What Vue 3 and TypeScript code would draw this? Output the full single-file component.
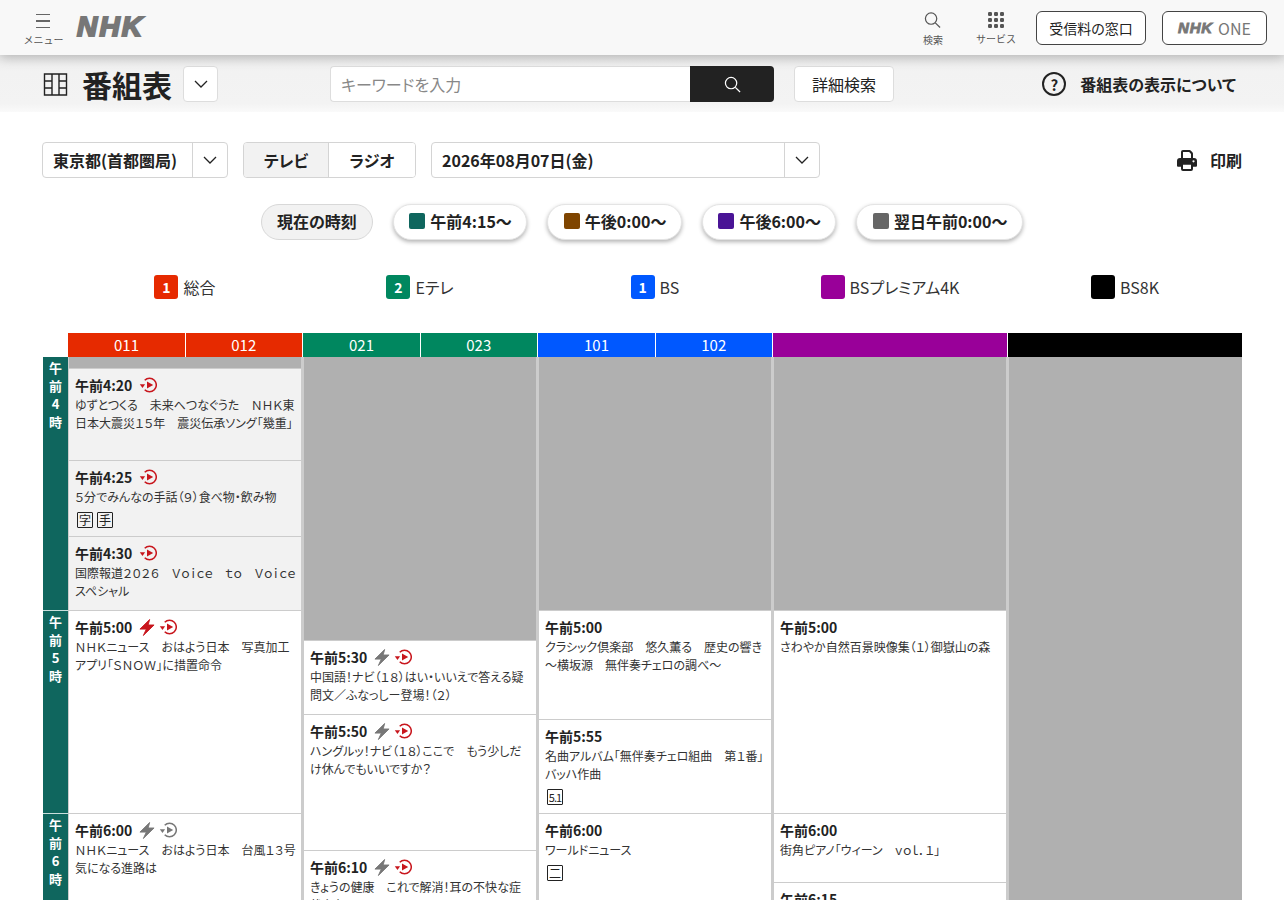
<script setup lang="ts">
import { computed } from 'vue'

type Program = {
	time?: string
	text?: string
	height: number
	past?: boolean
	blank?: boolean
	bolt?: 'red' | 'gray'
	replay?: 'red' | 'gray'
	marks?: string[]
}

const pills = [
	{ label: '午前4:15〜', color: '#0f665e' },
	{ label: '午後0:00〜', color: '#7f4500' },
	{ label: '午後6:00〜', color: '#4a1496' },
	{ label: '翌日午前0:00〜', color: '#666666' },
]

const channels = [
	{ badge: '1', name: '総合', color: '#e62a00', codes: ['011', '012'] },
	{ badge: '2', name: 'Eテレ', color: '#00875f', codes: ['021', '023'] },
	{ badge: '1', name: 'BS', color: '#0058ff', codes: ['101', '102'] },
	{ badge: '', name: 'BSプレミアム4K', color: '#990099', codes: [] },
	{ badge: '', name: 'BS8K', color: '#000000', codes: [] },
]

const hours = [
	{ chars: ['午', '前', '4', '時'], height: 254 },
	{ chars: ['午', '前', '5', '時'], height: 203 },
	{ chars: ['午', '前', '6', '時'], height: 203 },
]

const columns: Program[][] = [
	[
		{ blank: true, height: 12 },
		{
			time: '午前4:20',
			text: 'ゆずとつくる　未来へつなぐうた　ＮＨＫ東日本大震災１５年　震災伝承ソング「幾重」',
			height: 92,
			past: true,
			replay: 'red',
		},
		{ time: '午前4:25', text: '５分でみんなの手話（９）食べ物・飲み物', height: 76, past: true, replay: 'red', marks: ['字', '手'] },
		{ time: '午前4:30', text: '国際報道２０２６　Ｖｏｉｃｅ　ｔｏ　Ｖｏｉｃｅ　スペシャル', height: 74, past: true, replay: 'red' },
		{ time: '午前5:00', text: 'ＮＨＫニュース　おはよう日本　写真加工アプリ「ＳＮＯＷ」に措置命令', height: 203, bolt: 'red', replay: 'red' },
		{ time: '午前6:00', text: 'ＮＨＫニュース　おはよう日本　台風１３号　気になる進路は', height: 203, bolt: 'gray', replay: 'gray' },
	],
	[
		{ blank: true, height: 284 },
		{ time: '午前5:30', text: '中国語！ナビ（１８）はい・いいえで答える疑問文／ふなっしー登場！（２）', height: 74, bolt: 'gray', replay: 'red' },
		{ time: '午前5:50', text: 'ハングルッ！ナビ（１８）ここで　もう少しだけ休んでもいいですか？', height: 136, bolt: 'gray', replay: 'red' },
		{ time: '午前6:10', text: 'きょうの健康　これで解消！耳の不快な症状（１）', height: 160, bolt: 'gray', replay: 'red' },
	],
	[
		{ blank: true, height: 254 },
		{ time: '午前5:00', text: 'クラシック倶楽部　悠久薫る　歴史の響き　～横坂源　無伴奏チェロの調べ～', height: 109 },
		{ time: '午前5:55', text: '名曲アルバム「無伴奏チェロ組曲　第１番」バッハ作曲', height: 94, marks: ['5.1'] },
		{ time: '午前6:00', text: 'ワールドニュース', height: 160, marks: ['二'] },
	],
	[
		{ blank: true, height: 254 },
		{ time: '午前5:00', text: 'さわやか自然百景映像集（１）御嶽山の森', height: 203 },
		{ time: '午前6:00', text: '街角ピアノ「ウィーン　ｖｏｌ．１」', height: 69 },
		{ time: '午前6:15', text: '', height: 100 },
	],
	[{ blank: true, height: 660 }],
]

const iconColor = (name?: string) => (name === 'red' ? '#c8161d' : '#777777')

const prefecture = computed(() => '東京都(首都圏局)')
</script>

<template>
	<div class="page">
		<svg class="defs" width="0" height="0" aria-hidden="true">
			<symbol id="chevron" viewBox="0 0 16 16">
				<path d="M2 5l6 6 6-6" fill="none" stroke="currentColor" stroke-width="1.3" />
			</symbol>
			<symbol id="search" viewBox="0 0 18 18">
				<circle cx="7.500" cy="7.500" r="6" fill="none" stroke="currentColor" stroke-width="1.300" />
				<path d="M12 12l5 5" fill="none" stroke="currentColor" stroke-width="1.300" />
			</symbol>
			<symbol id="bolt" viewBox="0 0 16 17.300">
				<path d="M10.700 0.500L0.800 10.300H7.300L4.300 16.800 15.200 6.100H9.200z" fill="currentColor" stroke="currentColor" stroke-width="0.9" stroke-linejoin="round" />
			</symbol>
			<symbol id="replay" viewBox="0 0 18 18">
				<path d="M5.700 4.200A6.800 6.800 0 1 1 5.700 13.800" fill="none" stroke="currentColor" stroke-width="1.500" />
				<path d="M0.800 8.200h5.300L3.500 12z" fill="currentColor" />
				<path d="M8 5.400L14.200 9 8 12.600z" fill="currentColor" />
			</symbol>
		</svg>

		<header class="topbar">
			<button type="button" class="menu">
				<span class="burger"><i></i><i></i><i></i></span>
				<span class="tiny">メニュー</span>
			</button>
			<span class="logo">NHK</span>
			<div class="spacer"></div>
			<button type="button" class="tool tool-search">
				<svg class="tool-icon" width="18" height="18"><use href="#search" /></svg>
				<span class="tiny">検索</span>
			</button>
			<button type="button" class="tool tool-service">
				<svg class="tool-icon" width="16" height="16" viewBox="0 0 16 16">
					<g fill="#555555">
						<rect v-for="n in 9" :key="n" :x="((n - 1) % 3) * 6" :y="Math.floor((n - 1) / 3) * 6" width="4" height="4" rx="1.2" />
					</g>
				</svg>
				<span class="tiny">サービス</span>
			</button>
			<button type="button" class="outline fee">受信料の窓口</button>
			<button type="button" class="outline one"><span class="logo small">NHK</span><span class="one-text">ONE</span></button>
		</header>

		<section class="subbar">
			<svg class="table-icon" width="25" height="25" viewBox="0 0 25 25">
				<path d="M1.500 2h22v21h-22zM9 2v21M16 2v21M1.500 9h7.500M1.500 16h7.500M16 9h7.500M16 16h7.500" fill="none" stroke="#222222" stroke-width="1.400" />
			</svg>
			<h1 class="title">番組表</h1>
			<button type="button" class="box-btn chevron-btn">
				<svg width="16" height="16"><use href="#chevron" /></svg>
			</button>
			<div class="search">
				<input class="search-input" type="text" placeholder="キーワードを入力" />
				<button type="button" class="search-btn">
					<svg width="17" height="17"><use href="#search" /></svg>
				</button>
			</div>
			<button type="button" class="box-btn detail">詳細検索</button>
			<div class="spacer"></div>
			<a class="about">
				<span class="question">?</span>
				<span>番組表の表示について</span>
			</a>
		</section>

		<section class="controls">
			<div class="select area">
				<span class="select-label">{{ prefecture }}</span>
				<span class="select-arrow"><svg width="16" height="16"><use href="#chevron" /></svg></span>
			</div>
			<div class="toggle">
				<button type="button" class="toggle-item active">テレビ</button>
				<button type="button" class="toggle-item">ラジオ</button>
			</div>
			<div class="select date">
				<span class="select-label">2026年08月07日(金)</span>
				<span class="select-arrow"><svg width="16" height="16"><use href="#chevron" /></svg></span>
			</div>
			<div class="spacer"></div>
			<a class="print">
				<svg width="20" height="21" viewBox="0 0 20 20" preserveAspectRatio="none">
					<path
						fill="#222222"
						fill-rule="evenodd"
						d="M6 0h6.500c.6 0 1 .2 1.400.6l1.500 1.500c.4.4.6.9.6 1.400V7.500h1A3 3 0 0 1 20 10.500V15a1 1 0 0 1-1 1h-3v2a2 2 0 0 1-2 2H6a2 2 0 0 1-2-2v-2H1a1 1 0 0 1-1-1v-4.500a3 3 0 0 1 3-3h1V2a2 2 0 0 1 2-2zM6 2v5.500h8V3.800L12.200 2zM6 14v4h8v-4zM16.500 9.700a1.100 1.100 0 1 0 0 2.200 1.100 1.100 0 0 0 0-2.200z"
					/>
				</svg>
				<span>印刷</span>
			</a>
		</section>

		<nav class="pills">
			<button type="button" class="pill now">現在の時刻</button>
			<button v-for="pill in pills" :key="pill.label" type="button" class="pill">
				<span class="swatch" :style="{ background: pill.color }"></span>
				{{ pill.label }}
			</button>
		</nav>

		<div class="channels">
			<div v-for="ch in channels" :key="ch.name" class="channel">
				<span class="badge" :style="{ background: ch.color }">{{ ch.badge }}</span>
				<span>{{ ch.name }}</span>
			</div>
		</div>

		<div class="heads">
			<div v-for="ch in channels" :key="ch.name" class="head" :style="{ background: ch.color }">
				<span v-for="code in ch.codes" :key="code" class="code">{{ code }}</span>
			</div>
		</div>

		<div class="grid">
			<div class="hours">
				<div v-for="(hour, i) in hours" :key="i" class="hour" :style="{ height: hour.height + 'px' }">
					<span v-for="(c, j) in hour.chars" :key="j">{{ c }}</span>
				</div>
			</div>
			<div v-for="(col, i) in columns" :key="i" class="column">
				<template v-for="(p, j) in col" :key="j">
					<div v-if="p.blank" class="blank" :style="{ height: p.height + 'px' }"></div>
					<article v-else class="program" :class="{ past: p.past }" :style="{ height: p.height + 'px' }">
						<div class="time-row">
							<span class="time">{{ p.time }}</span>
							<svg v-if="p.bolt" class="bolt" width="16" height="17" :style="{ color: iconColor(p.bolt) }"><use href="#bolt" /></svg>
							<svg v-if="p.replay" class="replay" width="18" height="18" :style="{ color: iconColor(p.replay) }"><use href="#replay" /></svg>
						</div>
						<p class="desc">{{ p.text }}</p>
						<div v-if="p.marks" class="marks">
							<span v-for="m in p.marks" :key="m" class="mark" :class="{ narrow: m === '5.1' }">{{ m }}</span>
						</div>
					</article>
				</template>
			</div>
		</div>
	</div>
</template>

<style>
html,
body {
	margin: 0;
	background: #ffffff;
}
</style>

<style scoped>
.page {
	height: 900px;
	overflow: hidden;
	background: #ffffff;
	color: #222222;
	font-family: 'Noto Sans CJK JP', 'Noto Sans', sans-serif;
	font-feature-settings: 'palt';
}

button {
	font-family: inherit;
	font-feature-settings: inherit;
	color: inherit;
	cursor: pointer;
}

.defs {
	position: absolute;
}

.spacer {
	flex: 1;
}

.topbar {
	position: relative;
	z-index: 2;
	display: flex;
	align-items: center;
	height: 55px;
	padding: 0 17px 0 24px;
	box-sizing: border-box;
	background: #f8f8f8;
	box-shadow: 0 3px 10px rgba(0, 0, 0, 0.22);
}

.menu,
.tool {
	display: flex;
	flex-direction: column;
	align-items: center;
	padding: 0;
	border: 0;
	background: none;
}

.menu {
	width: 39px;
	margin-top: 4px;
}

.burger {
	display: flex;
	flex-direction: column;
	gap: 5px;
	width: 14px;
	height: 18px;
	margin: 0 1px 2px 0;
}

.burger i {
	display: block;
	height: 1.5px;
	background: #666666;
}

.tiny {
	font-feature-settings: normal;
	font-size: 10px;
	line-height: 12px;
	color: #555555;
	white-space: nowrap;
}

.logo {
	margin: -1px 0 0 14px;
	color: #777777;
	font-family: 'Liberation Sans', sans-serif;
	font-size: 28px;
	font-style: italic;
	font-weight: 700;
	letter-spacing: 2.2px;
	-webkit-text-stroke: 2px #777777;
}

.logo.small {
	margin: 0;
	font-size: 15px;
	letter-spacing: 0.8px;
	-webkit-text-stroke: 0.9px #777777;
}

.tool {
	margin-top: 2px;
}

.tool-icon {
	margin-bottom: 5px;
	color: #555555;
}

.tool-search {
	margin-right: 33px;
}

.tool-search .tool-icon {
	width: 17px;
	margin-right: 2px;
}

.tool-service {
	margin-right: 20px;
}

.outline {
	display: flex;
	align-items: center;
	justify-content: center;
	height: 34px;
	border: 1px solid #444444;
	border-radius: 6px;
	background: #ffffff;
	font-size: 14px;
}

.fee {
	width: 110px;
	margin-right: 16px;
}

.one {
	gap: 5px;
	width: 105px;
	padding: 0;
}

.one-text {
	color: #777777;
	font-size: 16px;
}

.subbar {
	display: flex;
	align-items: center;
	height: 57px;
	padding: 1px 48px 0 43px;
	box-sizing: border-box;
	background: linear-gradient(#ececec, #f2f2f2 30%, #f3f3f3 85%, #fafafa);
}

.table-icon {
	margin-right: 14px;
}

.title {
	margin: 0 11px 0 0;
	font-size: 30px;
	font-weight: 700;
	line-height: 36px;
}

.box-btn {
	height: 36px;
	border: 1px solid #dddddd;
	border-radius: 4px;
	background: #ffffff;
}

.chevron-btn {
	display: flex;
	align-items: center;
	justify-content: center;
	width: 35px;
	margin-right: 112px;
	padding: 0;
}

.search {
	display: flex;
	width: 444px;
	height: 36px;
	margin-right: 20px;
}

.search-input {
	flex: 1;
	min-width: 0;
	padding: 0 10px;
	border: 1px solid #dddddd;
	border-right: 0;
	border-radius: 4px 0 0 4px;
	background: #ffffff;
	font-family: inherit;
	font-feature-settings: inherit;
	font-size: 16px;
	outline: none;
}

.search-input::placeholder {
	color: #888888;
}

.search-btn {
	display: flex;
	align-items: center;
	justify-content: center;
	width: 84px;
	padding: 0;
	border: 0;
	border-radius: 0 4px 4px 0;
	background: #222222;
	color: #ffffff;
}

.detail {
	width: 100px;
	font-size: 16px;
}

.about {
	display: flex;
	align-items: center;
	gap: 14px;
	font-size: 16px;
	font-weight: 700;
}

.question {
	display: flex;
	align-items: center;
	justify-content: center;
	width: 20px;
	height: 20px;
	border: 2px solid #222222;
	border-radius: 50%;
	font-size: 15px;
}

.controls {
	display: flex;
	align-items: center;
	height: 36px;
	margin-top: 30px;
	padding: 0 42px;
}

.select {
	display: flex;
	align-items: center;
	height: 36px;
	box-sizing: border-box;
	border: 1px solid #d4d4d4;
	border-radius: 4px;
	font-size: 16px;
	font-weight: 700;
}

.select-label {
	flex: 1;
	padding-left: 10px;
}

.select-arrow {
	display: flex;
	align-items: center;
	justify-content: center;
	width: 34px;
	height: 100%;
	border-left: 1px solid #d4d4d4;
}

.area {
	width: 186px;
}

.date {
	width: 389px;
}

.toggle {
	display: flex;
	width: 173px;
	height: 36px;
	margin: 0 15px;
	box-sizing: border-box;
	border: 1px solid #d4d4d4;
	border-radius: 4px;
	overflow: hidden;
}

.toggle-item {
	flex: 1;
	padding: 0;
	border: 0;
	background: #ffffff;
	font-size: 16px;
	font-weight: 700;
}

.toggle-item.active {
	flex: 0 0 85px;
	border-right: 1px solid #d4d4d4;
	background: #f2f2f2;
}

.print {
	display: flex;
	align-items: center;
	gap: 13px;
	font-size: 16px;
	font-weight: 700;
}

.pills {
	display: flex;
	justify-content: center;
	gap: 20px;
	margin-top: 26px;
}

.pill {
	display: flex;
	align-items: center;
	gap: 5px;
	height: 36px;
	padding: 0 14.5px 2px 15.5px;
	border: 1px solid #e4e4e4;
	border-radius: 18px;
	background: #ffffff;
	box-shadow: 0 2px 4px rgba(0, 0, 0, 0.3);
	font-size: 16px;
	font-weight: 700;
	white-space: nowrap;
}

.pill.now {
	padding: 0 15px 2px;
	border-color: #d8d8d8;
	background: #f2f2f2;
	box-shadow: none;
}

.swatch {
	width: 16px;
	height: 16px;
	border-radius: 2px;
}

.channels {
	display: grid;
	grid-template-columns: repeat(5, 235px);
	height: 24px;
	margin: 35px 0 0 67.5px;
}

.channel {
	display: flex;
	align-items: center;
	justify-content: center;
	gap: 5px;
	font-size: 16px;
	color: #333333;
}

.badge {
	display: flex;
	align-items: center;
	justify-content: center;
	width: 24px;
	height: 24px;
	border-radius: 3px;
	color: #ffffff;
	font-size: 14px;
	font-weight: 700;
}

.heads {
	display: grid;
	grid-template-columns: repeat(5, 235px);
	height: 24px;
	margin: 34px 0 0 68px;
}

.head {
	display: flex;
	height: 24px;
	margin-right: 1.5px;
}

.head:last-child {
	margin-right: 1px;
}

.code {
	flex: 1;
	color: #ffffff;
	font-size: 15px;
	line-height: 24px;
	text-align: center;
}

.code:first-child {
	flex: 0 0 117px;
}

.code + .code {
	border-left: 1px solid #ffffff;
}

.grid {
	display: grid;
	grid-template-columns: 25px repeat(5, 235px);
	margin-left: 43px;
}

.hours {
	display: flex;
	flex-direction: column;
}

.hour {
	display: flex;
	flex-direction: column;
	align-items: center;
	padding-top: 2px;
	box-sizing: border-box;
	border-bottom: 1px solid #c9dedc;
	background: #0f665e;
	color: #ffffff;
	font-size: 13px;
	font-weight: 700;
	line-height: 18px;
}

.column {
	display: flex;
	flex-direction: column;
	box-sizing: border-box;
	border-right: 2px solid #cccccc;
	border-left: 1px solid #cccccc;
}

.column:last-child {
	border-right: 0;
	margin-right: 1px;
}

.blank {
	flex: none;
	box-sizing: border-box;
	border-bottom: 1px solid #cccccc;
	background: #b0b0b0;
}

.program {
	flex: none;
	padding: 7px 5px 0 6px;
	box-sizing: border-box;
	border-bottom: 1px solid #cccccc;
	background: #ffffff;
}

.program.past {
	background: #f2f2f2;
}

.time-row {
	display: flex;
	align-items: center;
	height: 20px;
}

.time {
	margin: -2px 7px 0 0;
	font-size: 14px;
	font-weight: 700;
	line-height: 20px;
}

.bolt {
	margin-right: 4px;
	margin-top: -2px;
}

.replay {
	margin-top: -3px;
	margin-left: 0;
}

.desc {
	margin: 0;
	color: #333333;
	font-size: 12px;
	line-height: 18px;
}

.marks {
	display: flex;
	gap: 4px;
	margin: 6px 0 0 2px;
}

.mark {
	display: flex;
	align-items: center;
	justify-content: center;
	width: 16px;
	height: 16px;
	box-sizing: border-box;
	border: 1px solid #222222;
	border-radius: 1px;
	font-size: 12px;
	line-height: 1;
	color: #222222;
}

.mark.narrow {
	font-size: 11px;
	letter-spacing: -1px;
}
</style>
